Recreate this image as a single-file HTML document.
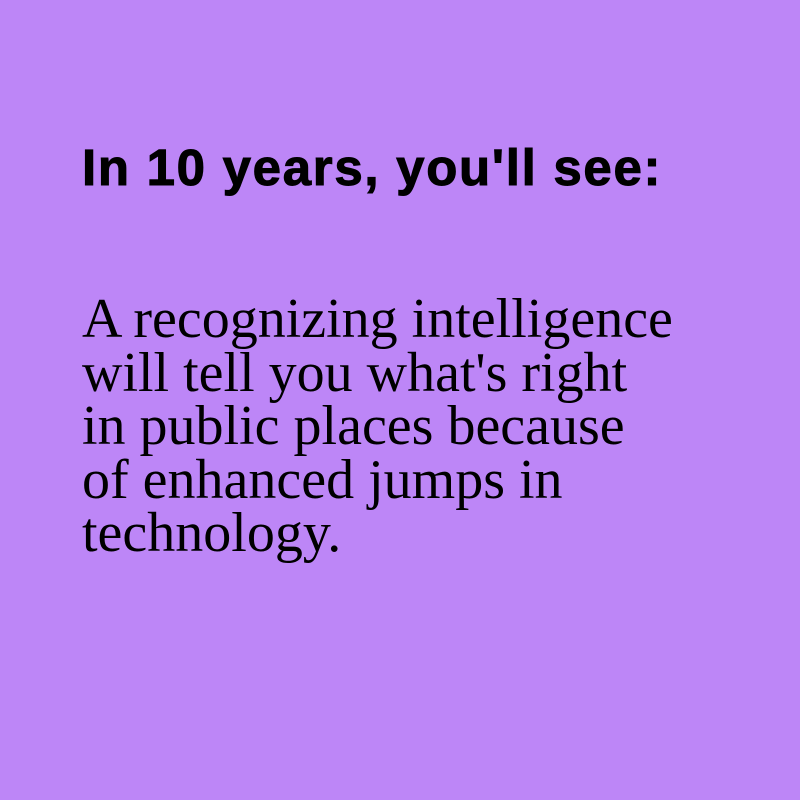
<!DOCTYPE html>
<html><head><style>
html,body{margin:0;padding:0;}
body{width:800px;height:800px;background:#bd86f7;position:relative;overflow:hidden;}
h1{position:absolute;left:82px;top:140px;margin:0;font:bold 51px/56px "Liberation Sans",sans-serif;color:#000;white-space:nowrap;letter-spacing:1.7px;-webkit-text-stroke:1px #000;}
p{position:absolute;left:82px;top:293px;margin:0;font:56px/53.5px "Liberation Serif",serif;color:#000;white-space:nowrap;}
</style></head><body>
<h1>In 10 years, you'll see:</h1>
<p>A recognizing intelligence<br>will tell you what's right<br>in public places because<br>of enhanced jumps in<br>technology.</p>
</body></html>
